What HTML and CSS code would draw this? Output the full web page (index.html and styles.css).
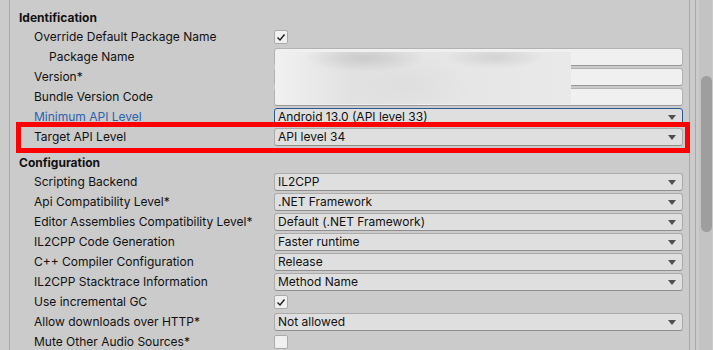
FILE: index.html
```html
<!DOCTYPE html>
<html>
<head>
<meta charset="utf-8">
<link rel="stylesheet" href="styles.css">
</head>
<body>
<div class="window">
  <div class="inspector">
    <section class="group">
      <div class="header">Identification</div>
      <div class="row"><span class="label l1">Override Default Package Name</span><span class="check on"><svg viewBox="0 0 14 14" width="14" height="14"><polyline points="3.5,7.5 6,10 10.5,4.5" fill="none" stroke="#1c1c1c" stroke-width="1.4"/></svg></span></div>
      <div class="row"><span class="label l2">Package Name</span><span class="text"></span></div>
      <div class="row"><span class="label l1">Version*</span><span class="text"></span></div>
      <div class="row"><span class="label l1">Bundle Version Code</span><span class="text"></span></div>
      <div class="row"><span class="label l1 link">Minimum API Level</span><span class="drop focus">Android 13.0 (API level 33)<svg class="arrow" viewBox="0 0 8 5" width="8" height="5"><polygon points="0,0 8,0 4,5" fill="#4f4f4f"/></svg></span></div>
      <div class="row"><span class="label l1">Target API Level</span><span class="drop">API level 34<svg class="arrow" viewBox="0 0 8 5" width="8" height="5"><polygon points="0,0 8,0 4,5" fill="#4f4f4f"/></svg></span></div>
    </section>
    <section class="group second">
      <div class="header">Configuration</div>
      <div class="row"><span class="label l1">Scripting Backend</span><span class="drop">IL2CPP<svg class="arrow" viewBox="0 0 8 5" width="8" height="5"><polygon points="0,0 8,0 4,5" fill="#4f4f4f"/></svg></span></div>
      <div class="row"><span class="label l1">Api Compatibility Level*</span><span class="drop">.NET Framework<svg class="arrow" viewBox="0 0 8 5" width="8" height="5"><polygon points="0,0 8,0 4,5" fill="#4f4f4f"/></svg></span></div>
      <div class="row"><span class="label l1">Editor Assemblies Compatibility Level*</span><span class="drop">Default (.NET Framework)<svg class="arrow" viewBox="0 0 8 5" width="8" height="5"><polygon points="0,0 8,0 4,5" fill="#4f4f4f"/></svg></span></div>
      <div class="row"><span class="label l1">IL2CPP Code Generation</span><span class="drop">Faster runtime<svg class="arrow" viewBox="0 0 8 5" width="8" height="5"><polygon points="0,0 8,0 4,5" fill="#4f4f4f"/></svg></span></div>
      <div class="row"><span class="label l1">C++ Compiler Configuration</span><span class="drop">Release<svg class="arrow" viewBox="0 0 8 5" width="8" height="5"><polygon points="0,0 8,0 4,5" fill="#4f4f4f"/></svg></span></div>
      <div class="row"><span class="label l1">IL2CPP Stacktrace Information</span><span class="drop">Method Name<svg class="arrow" viewBox="0 0 8 5" width="8" height="5"><polygon points="0,0 8,0 4,5" fill="#4f4f4f"/></svg></span></div>
      <div class="row"><span class="label l1">Use incremental GC</span><span class="check on"><svg viewBox="0 0 14 14" width="14" height="14"><polyline points="3.5,7.5 6,10 10.5,4.5" fill="none" stroke="#1c1c1c" stroke-width="1.4"/></svg></span></div>
      <div class="row"><span class="label l1">Allow downloads over HTTP*</span><span class="drop">Not allowed<svg class="arrow" viewBox="0 0 8 5" width="8" height="5"><polygon points="0,0 8,0 4,5" fill="#4f4f4f"/></svg></span></div>
      <div class="row"><span class="label l1">Mute Other Audio Sources*</span><span class="check"></span></div>
    </section>
    <div class="redact"></div>
    <div class="highlight"></div>
  </div>
  <div class="rail"><div class="rail-line"></div></div>
  <div class="scrollbar"><div class="thumb"></div></div>
</div>
</body>
</html>
```

FILE: styles.css
```css
html, body {
  margin: 0;
  padding: 0;
}
body {
  width: 713px;
  height: 350px;
  overflow: hidden;
  background: #cbcbcb;
  font-family: Inter, "Noto Sans", sans-serif;
  font-size: 12px;
  color: #111111;
}
.window {
  display: flex;
  height: 350px;
}
.inspector {
  position: relative;
  margin-left: 9px;
  border-left: 1px solid #a9a9a9;
  width: 680px;
  padding-top: 8px;
  padding-right: 6px;
  box-sizing: border-box;
}
.group.second {
  margin-top: 6px;
}
.header {
  height: 19px;
  line-height: 19px;
  padding-left: 9px;
  font-weight: 700;
}
.row {
  display: grid;
  grid-template-columns: 264px 1fr;
  align-items: center;
  height: 20px;
}
.label {
  line-height: 20px;
  white-space: nowrap;
  overflow: hidden;
}
.label.l1 { padding-left: 24px; }
.label.l2 { padding-left: 39px; }
.label.link { color: #2a62b0; }
.text, .drop {
  display: block;
  height: 18px;
  box-sizing: border-box;
  border-radius: 3px;
  line-height: 16px;
  padding-left: 3px;
  position: relative;
}
.text {
  background: #f0f0f0;
  border: 1px solid #b3b3b3;
  border-bottom-color: #999;
}
.drop {
  background: #dfdfdf;
  border: 1px solid #ababab;
  border-bottom-color: #8f8f8f;
}
.drop.focus {
  border-color: #2a5a94;
}
.arrow {
  position: absolute;
  right: 6px;
  top: 6px;
}
.check {
  display: block;
  width: 14px;
  height: 14px;
  box-sizing: border-box;
  background: #f0f0f0;
  border: 1px solid #aaa;
  border-radius: 2px;
}
.check svg {
  display: block;
  margin: -1px;
}
.redact {
  position: absolute;
  left: 265px;
  top: 52px;
  width: 296px;
  height: 52px;
  background:
    radial-gradient(ellipse 60px 14px at 90px 6px, rgba(200,200,200,0.9), rgba(200,200,200,0)),
    radial-gradient(ellipse 50px 12px at 220px 5px, rgba(205,205,205,0.8), rgba(205,205,205,0)),
    radial-gradient(ellipse 70px 30px at 130px 34px, rgba(222,222,222,0.9), rgba(222,222,222,0)),
    linear-gradient(90deg, #f1f1f1 0%, #e2e2e2 25%, #e6e6e6 60%, #e9e9e9 100%);
}
.highlight {
  position: absolute;
  left: 6px;
  top: 122px;
  width: 674px;
  height: 31px;
  box-sizing: border-box;
  border: 5px solid #ff0000;
}
.rail {
  width: 10px;
  border-left: 1px solid #a9a9a9;
  box-sizing: border-box;
  display: flex;
  justify-content: flex-end;
}
.rail-line {
  width: 1px;
  margin-right: 3px;
  background: #a9a9a9;
}
.scrollbar {
  width: 13px;
  background: #c3c3c3;
  padding-top: 76px;
  padding-left: 2px;
  box-sizing: border-box;
}
.thumb {
  height: 156px;
  background: #9e9e9e;
  border-radius: 6px 0 0 6px;
  border-top-right-radius: 6px;
  border-bottom-right-radius: 6px;
}
```
